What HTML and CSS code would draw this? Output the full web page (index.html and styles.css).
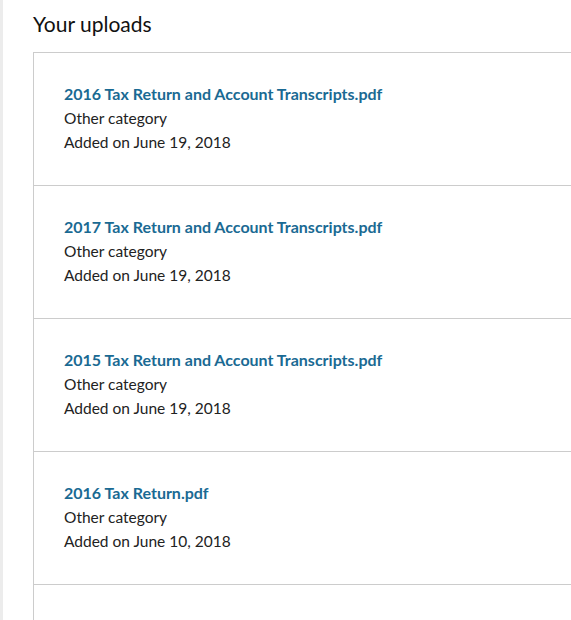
FILE: index.html
```html
<!DOCTYPE html>
<html>
<head>
<meta charset="utf-8">
<link rel="stylesheet" href="styles.css">
</head>
<body>
<div class="page">
  <div class="rail"></div>
  <main class="content">
    <h1 class="title">Your uploads</h1>
    <ul class="list">
      <li class="item">
        <a class="name">2016 Tax Return and Account Transcripts.pdf</a>
        <div class="meta">Other category</div>
        <div class="meta">Added on June 19, 2018</div>
      </li>
      <li class="item">
        <a class="name">2017 Tax Return and Account Transcripts.pdf</a>
        <div class="meta">Other category</div>
        <div class="meta">Added on June 19, 2018</div>
      </li>
      <li class="item">
        <a class="name">2015 Tax Return and Account Transcripts.pdf</a>
        <div class="meta">Other category</div>
        <div class="meta">Added on June 19, 2018</div>
      </li>
      <li class="item">
        <a class="name">2016 Tax Return.pdf</a>
        <div class="meta">Other category</div>
        <div class="meta">Added on June 10, 2018</div>
      </li>
      <li class="item"></li>
    </ul>
  </main>
</div>
</body>
</html>
```

FILE: styles.css
```css
html, body {
  margin: 0;
  padding: 0;
  background: #fff;
  overflow: hidden;
}
.page {
  display: flex;
  height: 620px;
  overflow: hidden;
  font-family: Lato, "Open Sans", sans-serif;
  color: #222;
}
.rail {
  width: 3px;
  flex: none;
  background: #ececec;
}
.content {
  flex: 1;
  padding-left: 30px;
  min-width: 0;
}
.title {
  margin: 0;
  padding-top: 11px;
  height: 52px;
  box-sizing: border-box;
  font-size: 21px;
  font-weight: 400;
  line-height: 26px;
  color: #111;
}
.list {
  list-style: none;
  margin: 0;
  padding: 0;
  border-top: 1px solid #ccc;
  border-left: 1px solid #ccc;
}
.item {
  height: 133px;
  box-sizing: border-box;
  padding: 29px 0 0 30px;
  border-bottom: 1px solid #ccc;
  display: flex;
  flex-direction: column;
}
.name {
  font-size: 16px;
  font-weight: 700;
  line-height: 24px;
  color: #1a6a93;
}
.meta {
  font-size: 15.5px;
  line-height: 24px;
  color: #222;
}
```
